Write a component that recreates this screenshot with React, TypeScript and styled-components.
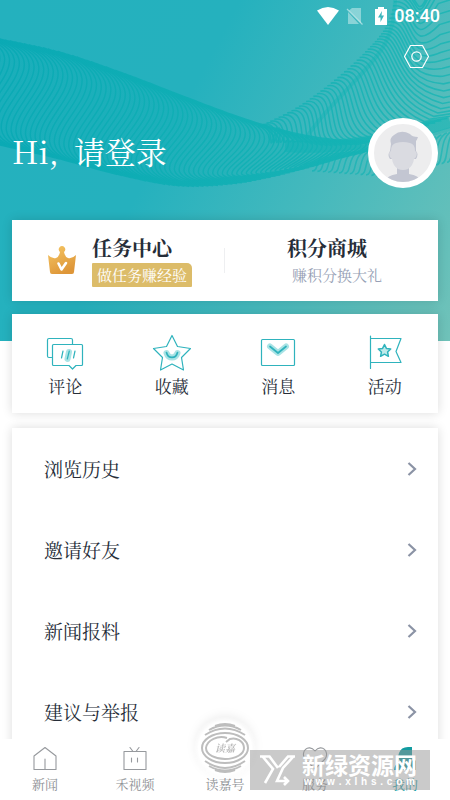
import React from "react";
import styled, { createGlobalStyle } from "styled-components";

const TEAL = "#2fb3bd";
const INK = "#262d38";
const SERIF = `"Noto Serif CJK SC", "Source Han Serif SC", "Noto Sans CJK SC", "Liberation Serif", serif`;

const Global = createGlobalStyle`
  * { box-sizing: border-box; }
  body { margin: 0; background: #fff; font-family: ${SERIF}; color: ${INK}; }
  button { font: inherit; color: inherit; background: none; border: 0; padding: 0; cursor: pointer; }
  a { color: inherit; text-decoration: none; }
  h1, h2, p, ul { margin: 0; padding: 0; font-weight: 400; }
  ul { list-style: none; }
  svg { display: block; }
`;

const Page = styled.div`
  position: relative;
  display: flex;
  flex-direction: column;
  height: 100vh;
  overflow: hidden;
`;

const Backdrop = styled.div`
  position: absolute;
  top: 0;
  left: 0;
  right: 0;
  height: 341px;
  background: linear-gradient(118deg, #24b1be 0%, #25b1be 38%, #45b9bd 66%, #70c2b9 100%);
`;

const Scroller = styled.main`
  position: relative;
  flex: 1;
  min-height: 0;
  overflow-y: auto;
  scrollbar-width: none;
  &::-webkit-scrollbar { display: none; }
`;

const StatusBar = styled.div`
  display: flex;
  justify-content: flex-end;
  align-items: center;
  height: 32px;
  padding: 0 10px;
  color: #fff;
  font: 500 18px/32px Roboto, sans-serif;
`;

const StatusIcons = styled.div`
  display: flex;
  align-items: center;
  gap: 7px;
  margin-right: 3px;
`;

const Toolbar = styled.div`
  display: flex;
  justify-content: flex-end;
  padding: 11px 20px 0;
`;

const Greeting = styled.header`
  display: flex;
  align-items: center;
  justify-content: space-between;
  padding: 0 12px;
  margin-top: 48px;
  color: #fff;
`;

const Hello = styled.h1`
  display: flex;
  gap: 15px;
  align-items: baseline;
  padding-bottom: 4px;
  font-size: 31px;
  line-height: 40px;
`;

const Avatar = styled.button`
  width: 70px;
  height: 70px;
  border-radius: 50%;
  border: 6px solid #fff;
  overflow: hidden;
  background: #ededee;
`;

const Card = styled.section`
  margin: 0 12px;
  background: #fff;
  box-shadow: 0 0 10px rgba(0, 0, 0, 0.14);
`;

const Promo = styled(Card)`
  display: grid;
  grid-template-columns: 1fr 1fr;
  height: 81px;
  margin-top: 32px;
`;

const PromoItem = styled.a<{ $divider?: boolean }>`
  position: relative;
  display: flex;
  align-items: center;
  gap: 15px;
  padding-left: ${(p) => (p.$divider ? 35 : 62)}px;
  padding-bottom: 1px;
  &::after {
    content: "";
    display: ${(p) => (p.$divider ? "block" : "none")};
    position: absolute;
    right: 0;
    top: 28px;
    width: 1px;
    height: 25px;
    background: #eeeff1;
  }
`;

const PromoTitle = styled.h2`
  font-size: 20px;
  line-height: 28px;
  font-weight: 700;
`;

const Tag = styled.p`
  margin-top: 1px;
  padding: 0 5px;
  font-size: 15px;
  line-height: 24px;
  color: #fff;
  background: #dcbc69;
  border-radius: 1px 5px 1px 1px;
`;

const Hint = styled.p`
  margin-top: 1px;
  padding: 0 5px;
  font-size: 15px;
  line-height: 24px;
  color: #979fb5;
`;

const Shortcuts = styled(Card)`
  display: grid;
  grid-template-columns: repeat(4, 1fr);
  height: 99px;
  margin-top: 13px;
`;

const Shortcut = styled.button`
  display: flex;
  flex-direction: column;
  align-items: center;
  padding-top: 18px;
  font-size: 17px;
  line-height: 24px;
`;

const ShortcutIcon = styled.svg`
  width: 40px;
  height: 40px;
  margin-bottom: 2px;
  fill: none;
  stroke: ${TEAL};
  stroke-width: 1.2;
  stroke-linejoin: round;
  stroke-linecap: round;
`;

const Menu = styled(Card)`
  margin-top: 15px;
`;

const MenuRow = styled.button`
  display: flex;
  align-items: center;
  justify-content: space-between;
  width: 100%;
  height: 81px;
  padding: 0 21px 0 32px;
  font-size: 19px;
  line-height: 28px;
`;

const TabBar = styled.nav`
  position: relative;
  display: grid;
  grid-template-columns: repeat(5, 1fr);
  grid-template-rows: 61px;
  height: 61px;
  background: #fff;
`;

const Tab = styled.a<{ $active?: boolean }>`
  display: flex;
  flex-direction: column;
  align-items: center;
  justify-content: flex-end;
  gap: 2px;
  min-height: 0;
  padding-bottom: 7px;
  font-size: 13px;
  line-height: 18px;
  color: ${(p) => (p.$active ? "#129ba0" : "#8d9094")};
`;

const TabIcon = styled.svg`
  flex: none;
  width: 28px;
  height: 28px;
  fill: none;
  stroke: #96999d;
  stroke-width: 1.1;
  stroke-linejoin: round;
  stroke-linecap: round;
`;

const Medal = styled.svg`
  flex: none;
  width: 62px;
  height: 62px;
  margin-bottom: -6px;
  border-radius: 50%;
  background: radial-gradient(circle, #fff 60%, rgba(255, 255, 255, 0) 72%);
  filter: drop-shadow(0 -3px 5px rgba(0, 0, 0, 0.08));
`;

const TabText = styled.span`
  position: relative;
`;

const Watermark = styled.aside`
  position: absolute;
  right: 20px;
  bottom: 10px;
  display: flex;
  align-items: center;
  gap: 6px;
  width: 180px;
  height: 40px;
  padding-left: 10px;
  color: #fff;
  background: rgba(150, 150, 150, 0.5);
  pointer-events: none;
  font-family: "Noto Sans CJK SC", sans-serif;
`;

const MarkName = styled.div`
  font-size: 23px;
  line-height: 24px;
  font-weight: 700;
  white-space: nowrap;
`;

const MarkSite = styled.div`
  display: flex;
  justify-content: space-between;
  padding: 0 2px;
  font: 700 10px/12px "Liberation Sans", sans-serif;
`;

type Pt = [number, number];

const cubic = (a: number, b: number, c: number, d: number, t: number) => {
  const u = 1 - t;
  return u * u * u * a + 3 * u * u * t * b + 3 * u * t * t * c + t * t * t * d;
};

const along = (pts: Pt[], t: number): Pt => {
  const n = pts.length - 1;
  const s = Math.max(0, Math.min(0.9999, t)) * n;
  const i = Math.floor(s);
  const f = s - i;
  const g = (k: number) => pts[Math.max(0, Math.min(n, k))];
  const mix = (j: 0 | 1) => {
    const p0 = g(i - 1)[j], p1 = g(i)[j], p2 = g(i + 1)[j], p3 = g(i + 2)[j];
    return cubic(p1, p1 + (p2 - p0) / 6, p2 - (p3 - p1) / 6, p2, f);
  };
  return [mix(0), mix(1)];
};

const topEdge: Pt[] = [[-120, 22], [-60, 30], [0, 39], [60, 52], [120, 72], [180, 95], [240, 118], [300, 136], [360, 145], [420, 140], [480, 122]];
const lowEdge: Pt[] = [[-120, 118], [-60, 131], [0, 145], [60, 159], [120, 175], [180, 186], [240, 183], [300, 170], [360, 152], [420, 136], [480, 118]];
const fringe: Pt[] = [[258, 127], [296, 108], [332, 82], [364, 53], [386, 26], [397, -10]];
const outlet: Pt[] = [[285, 137], [325, 146], [368, 142], [420, 128], [466, 104], [470, 40], [470, -40]];

const pt = (p: Pt) => `${p[0].toFixed(1)} ${p[1].toFixed(1)}`;
const onX = (edge: Pt[], x: number) => along(edge, (x + 120) / 600);

const ribbon = Array.from({ length: 100 }, (_, i) => {
  const x = -60 + i * 4.8;
  return `M${pt(onX(topEdge, x - 60))}C${pt(onX(topEdge, x + 50))} ${pt(onX(lowEdge, x - 120))} ${pt(onX(lowEdge, x - 10))}`;
}).join("");

const fan = Array.from({ length: 52 }, (_, i) => {
  const t = i / 51;
  const a = along(fringe, t);
  const b = along(outlet, t);
  const dx = 22 + 4 * t;
  return `M${pt(a)}C${pt([a[0] + dx, a[1] - 4])} ${pt([a[0] + 6 + 10 * t, a[1] + 38 + 12 * t])} ${pt([b[0] - 8 - 26 * t, b[1] - 10 + 22 * t])}L${pt(b)}`;
}).join("");

const tail = Array.from({ length: 28 }, (_, i) => {
  const x = 312 + i * 5.4;
  const y = i < 14 ? 171 + i * 0.4 : 176.6 - (i - 14) * 1.3;
  const rise = 18 + i * 0.7;
  return `M${x.toFixed(1)} ${y.toFixed(1)}c8 0 2 -${(rise * 0.8).toFixed(1)} 16 -${rise.toFixed(1)}`;
}).join("");

const edgePath = (edge: Pt[]) => edge.map((_, i) => pt(along(edge, i / 10))).join("L");

function Waves() {
  return (
    <svg width="100%" height="341" viewBox="0 0 450 341" preserveAspectRatio="none" aria-hidden="true">
      <defs>
        <linearGradient id="ribbonTint" x1="0" x2="450" y1="0" y2="0" gradientUnits="userSpaceOnUse">
          <stop offset="0" stopColor="#08a9b4" />
          <stop offset="1" stopColor="#17b5b4" />
        </linearGradient>
      </defs>
      <path
        d={`M${edgePath(topEdge)}L${edgePath([...lowEdge].reverse())}Z`}
        fill="url(#ribbonTint)"
        opacity="0.35"
      />
      <g fill="none" stroke="url(#ribbonTint)">
        <path d={ribbon} strokeWidth="1.5" opacity="0.9" />
        <path d={fan} strokeWidth="1.6" opacity="0.8" />
        <path d={tail} strokeWidth="1.6" opacity="0.7" />
        <path d="M395 -4C396 42 376 58 352 84S318 120 306 138" strokeWidth="4" opacity="0.4" />
        <path d="M285 146C340 150 390 140 450 122" strokeWidth="12" opacity="0.6" />
      </g>
    </svg>
  );
}

const shortcuts = [
  {
    label: "评论",
    art: (
      <>
        <path d="M6.500 28.500H4Q2.500 28.500 2.500 27V11Q2.500 9.500 4 9.500H26Q27.500 9.500 27.500 11V15" />
        <path d="M8.500 15.500H36.500Q37.500 15.500 37.500 16.500V35.500Q37.500 36.500 36.500 36.500H31L27.500 40L24 36.500H8.500Q7.500 36.500 7.500 35.500V16.500Q7.500 15.500 8.500 15.500Z" />
        <path d="M22.500 30L24 23" stroke="#a9e3e5" strokeWidth="6" />
        <path d="M16.500 29L18 22M22.300 30L24.300 22M28.500 29L30 22" />
      </>
    ),
  },
  {
    label: "收藏",
    art: (
      <>
        <path d="M20 6.500L25.500 17.500L38.500 19.500L29.500 28.500L31.500 41L20 35L8.500 41L10.500 28.500L1.500 19.500L14.500 17.500Z" />
        <path d="M14.500 24C16.500 30 23.500 30 25.500 24" stroke="#a9e3e5" strokeWidth="6" />
        <path d="M14.500 23.500C16 30 24 30 25.500 23.500" strokeWidth="1.700" />
      </>
    ),
  },
  {
    label: "消息",
    art: (
      <>
        <rect x="3.500" y="10.500" width="33" height="26" rx="1" />
        <path d="M12 17.500L20 24L28 17.500" stroke="#a9e3e5" strokeWidth="6" />
        <path d="M12 17.500L20 24L28 17.500" strokeWidth="1.700" />
      </>
    ),
  },
  {
    label: "活动",
    art: (
      <>
        <path d="M5.500 7V39.500M5.500 9.500H36L31 22.500L36 33.500H5.500" />
        <path d="M19.500 15.500L21.400 19.400L25.700 20L22.600 23L23.400 27.300L19.500 25.200L15.600 27.300L16.400 23L13.300 20L17.600 19.400Z" fill="#bfeaea" strokeWidth="1.500" />
      </>
    ),
  },
];

const rows = ["浏览历史", "邀请好友", "新闻报料", "建议与举报"];

export default function App() {
  return (
    <Page>
      <Global />
      <Backdrop><Waves /></Backdrop>
      <Scroller>
        <StatusBar>
          <StatusIcons>
            <svg width="22" height="18" viewBox="0 0 22 18" fill="#fff"><path d="M0 3.500Q11 -3.500 22 3.500L11 18Z" /></svg>
            <svg width="18" height="18" viewBox="0 0 18 18">
              <path d="M6 1H15V16L3 3.500ZM2 5L13 17H2Z" fill="#fff" opacity="0.4" />
              <path d="M1 2L16.500 17.500" stroke="#fff" strokeWidth="1.200" opacity="0.5" />
            </svg>
            <svg width="20" height="20" viewBox="0 0 20 20">
              <path d="M7 1H13V3H16V19H4V3H7Z" fill="#fff" />
              <path d="M11 5L7 11.500H9.500V16L13 9.500H10.500Z" fill="#3bb6bd" />
            </svg>
          </StatusIcons>
          <span>08:40</span>
        </StatusBar>
        <Toolbar>
          <button aria-label="设置">
            <svg width="27" height="27" viewBox="0 0 27 27" fill="none" stroke="#fff" strokeWidth="1.200" strokeLinejoin="round">
              <path d="M7.500 2.500H19.500L25.500 13.500L19.500 24.500H7.500L1.500 13.500Z" />
              <circle cx="13.500" cy="13.500" r="4.700" />
            </svg>
          </button>
        </Toolbar>
        <Greeting>
          <Hello><span>Hi,</span><span>请登录</span></Hello>
          <Avatar aria-label="登录">
            <svg width="58" height="58" viewBox="0 0 58 58">
              <path d="M11 58Q13 51 23 50V44H35V50Q45 51 47 58Z" fill="#c3c6d2" />
              <path d="M17 20Q15 14 20 11Q27 5 36 10Q38 13 44 13Q43 16 42 17L42 27Q45 30 42 35H16Q13 31 16 27Z" fill="#c3c6d2" />
              <path d="M17 27Q17 20 22 19Q29 17 36 19Q41 20 41 27Q44 28 42 33L40 35Q39 42 34 45Q29 47 24 45Q19 42 18 35L16 33Q14 28 17 27Z" fill="#dadbe1" />
            </svg>
          </Avatar>
        </Greeting>
        <Promo>
          <PromoItem href="#tasks" $divider>
            <svg width="30" height="30" viewBox="0 0 30 30">
              <defs>
                <linearGradient id="crown" x1="0" y1="0" x2="0.500" y2="1">
                  <stop offset="0" stopColor="#f6c866" />
                  <stop offset="1" stopColor="#de9638" />
                </linearGradient>
              </defs>
              <path d="M1 10Q5 14 9 13Q12 12 13 7A3.300 3.300 0 1 1 17 7Q18 12 21 13Q25 14 29 10L27 27Q27 29 25 29H5Q3 29 3 27Z" fill="url(#crown)" />
              <path d="M11.500 18.500L14.500 24.500L19 18" fill="none" stroke="#fff" strokeWidth="2.600" strokeLinecap="round" strokeLinejoin="round" />
            </svg>
            <div><PromoTitle>任务中心</PromoTitle><Tag>做任务赚经验</Tag></div>
          </PromoItem>
          <PromoItem href="#shop">
            <div><PromoTitle>积分商城</PromoTitle><Hint>赚积分换大礼</Hint></div>
          </PromoItem>
        </Promo>
        <Shortcuts>
          {shortcuts.map((s) => (
            <Shortcut key={s.label}>
              <ShortcutIcon viewBox="0 3 40 40">{s.art}</ShortcutIcon>
              {s.label}
            </Shortcut>
          ))}
        </Shortcuts>
        <Menu>
          <ul>
            {rows.map((r) => (
              <li key={r}>
                <MenuRow>
                  {r}
                  <svg width="10" height="14" viewBox="0 0 10 14" fill="none" stroke="#8b93a5" strokeWidth="2.200"><path d="M1.500 1L8 7L1.500 13" /></svg>
                </MenuRow>
              </li>
            ))}
          </ul>
        </Menu>
      </Scroller>
      <TabBar>
        <Tab href="#news">
          <TabIcon viewBox="0 0 28 28"><path d="M3 11L14 2.500L25 11V24.500H3ZM14 14V24" /></TabIcon>
          <TabText>新闻</TabText>
        </Tab>
        <Tab href="#video">
          <TabIcon viewBox="0 0 28 28"><path d="M3 6.500H25V24.500H3ZM9 2.500L12 6.500M18 2.500L15 6.500M10.500 13V17M16.500 13V17" /></TabIcon>
          <TabText>禾视频</TabText>
        </Tab>
        <Tab href="#dujia">
          <Medal viewBox="0 0 62 62" fill="none" stroke="#bdbdbd" strokeWidth="2">
            <path d="M21 9Q31 5 41 9M15 13Q31 4 47 13M11 18Q31 5 51 18M21 53Q31 57 41 53M15 49Q31 58 47 49M11 44Q31 58 51 44" />
            <ellipse cx="31" cy="31" rx="23" ry="15" />
            <path d="M33 21C24 18 13 23 12 31C12 38 22 42 31 42C42 42 50 37 50 31C50 24 42 20 36 22L32 25" />
            <text x="31" y="35" textAnchor="middle" fontSize="10" fontStyle="italic" fontWeight="700" fill="#bbbbbb" stroke="none">读嘉</text>
          </Medal>
          <TabText>读嘉号</TabText>
        </Tab>
        <Tab href="#service">
          <TabIcon viewBox="0 0 28 28"><path d="M14 24L4 14C-1 7 7 -2 14 6C21 -2 29 7 24 14Z" /></TabIcon>
          <TabText>服务</TabText>
        </Tab>
        <Tab href="#mine" $active>
          <TabIcon viewBox="0 0 28 28"><path d="M21 2V15.500H25V25H3Q3 19 10 17Q6 13 8 8Q10 2 17 2Z" fill="#129ba0" stroke="none" /></TabIcon>
          <TabText>我的</TabText>
        </Tab>
        <Watermark>
          <svg width="36" height="32" viewBox="0 0 36 32" fill="none" stroke="#fff" strokeWidth="2.600">
            <path d="M0 2.500H9.500L18 14M3 3L13 15L5 29M35 2.500H28L19 13M33 3L23 14L17 27H28M24 23L28 27L24 31" />
          </svg>
          <div>
            <MarkName>新绿资源网</MarkName>
            <MarkSite aria-label="www.xlhs.com">{"www.xlhs.com".split("").map((c, i) => <span key={i}>{c}</span>)}</MarkSite>
          </div>
        </Watermark>
      </TabBar>
    </Page>
  );
}
